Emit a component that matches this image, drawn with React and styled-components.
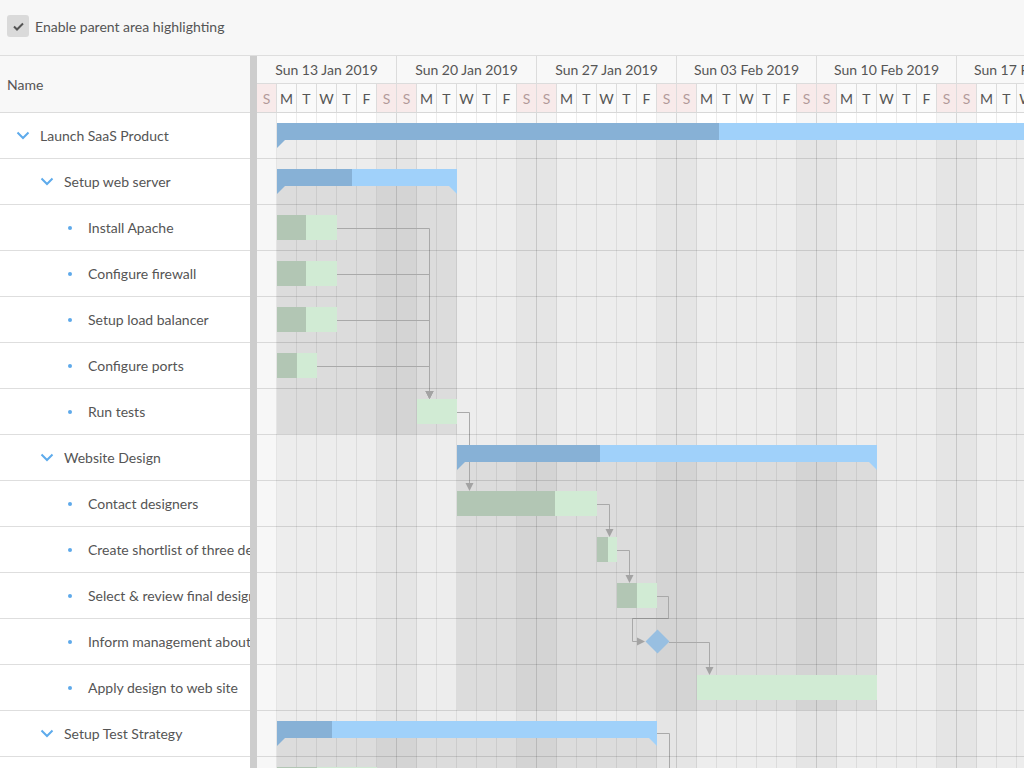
import React from "react";
import styled, { createGlobalStyle } from "styled-components";

const DAY = 20;
const ROW = 46;
const DAYS = 42;
const START = new Date(2019, 0, 13);
const MONTHS = ["Jan", "Feb", "Mar", "Apr", "May", "Jun", "Jul", "Aug", "Sep", "Oct", "Nov", "Dec"];
const LETTERS = ["S", "M", "T", "W", "T", "F", "S"];

const tasks = [
  { id: 1, name: "Launch SaaS Product", level: 0, kind: "parent", start: 1, end: 45, progress: 0.502 },
  { id: 2, name: "Setup web server", level: 1, kind: "parent", start: 1, end: 10, progress: 0.417 },
  { id: 3, name: "Install Apache", level: 2, kind: "leaf", start: 1, end: 4, progress: 0.48 },
  { id: 4, name: "Configure firewall", level: 2, kind: "leaf", start: 1, end: 4, progress: 0.48 },
  { id: 5, name: "Setup load balancer", level: 2, kind: "leaf", start: 1, end: 4, progress: 0.48 },
  { id: 6, name: "Configure ports", level: 2, kind: "leaf", start: 1, end: 3, progress: 0.5 },
  { id: 7, name: "Run tests", level: 2, kind: "leaf", start: 8, end: 10, progress: 0 },
  { id: 8, name: "Website Design", level: 1, kind: "parent", start: 10, end: 31, progress: 0.34 },
  { id: 9, name: "Contact designers", level: 2, kind: "leaf", start: 10, end: 17, progress: 0.7 },
  { id: 10, name: "Create shortlist of three designers", level: 2, kind: "leaf", start: 17, end: 18, progress: 0.55 },
  { id: 11, name: "Select & review final design", level: 2, kind: "leaf", start: 18, end: 20, progress: 0.5 },
  { id: 12, name: "Inform management about decision", level: 2, kind: "milestone", start: 20, end: 20, progress: 0 },
  { id: 13, name: "Apply design to web site", level: 2, kind: "leaf", start: 22, end: 31, progress: 0 },
  { id: 14, name: "Setup Test Strategy", level: 1, kind: "parent", start: 1, end: 20, progress: 0.145 },
  { id: 15, name: "Hire QA staff", level: 2, kind: "leaf", start: 1, end: 6, progress: 0.4 },
  { id: 16, name: "Write test specs", level: 2, kind: "leaf", start: 6, end: 12, progress: 0 },
  { id: 17, name: "Run integration tests", level: 2, kind: "leaf", start: 20, end: 24, progress: 0 },
];

const links = [
  [3, 7], [4, 7], [5, 7], [6, 7], [7, 9], [9, 10], [10, 11], [11, 12], [12, 13], [14, 17],
];

const GlobalStyle = createGlobalStyle`
  html, body { margin: 0; padding: 0; background: #fff; }
  body {
    font-family: Lato, "Open Sans", sans-serif;
    font-size: 14px;
    color: #555;
    overflow: hidden;
  }
  * { box-sizing: border-box; }
`;

const Page = styled.div`
  width: 1024px;
  height: 768px;
  display: flex;
  flex-direction: column;
  overflow: hidden;
`;

const Toolbar = styled.div`
  height: 56px;
  flex: none;
  display: flex;
  align-items: center;
  gap: 6px;
  padding: 0 0 3px 7px;
  background: #f7f7f7;
  border-bottom: 1px solid #dedede;
`;

const CheckBox = styled.span`
  width: 22px;
  height: 22px;
  border-radius: 3px;
  background: #dadada;
  display: flex;
  align-items: center;
  justify-content: center;
`;

const Main = styled.div`
  flex: 1;
  display: flex;
  min-height: 0;
`;

const TreePanel = styled.div`
  width: 250px;
  flex: none;
  background: #fff;
`;

const TreeHeader = styled.div`
  height: 57px;
  display: flex;
  align-items: center;
  padding-left: 7px;
  background: #f8f8f8;
  border-bottom: 1px solid #dcdcdc;
`;

const TreeRow = styled.div`
  height: ${ROW}px;
  display: flex;
  align-items: center;
  padding-left: ${(p) => 16 + p.$level * 24}px;
  border-bottom: 1px solid #dedede;
  white-space: nowrap;
  overflow: hidden;
`;

const IconSlot = styled.span`
  width: 24px;
  flex: none;
  display: flex;
  align-items: center;
`;

const Dot = styled.span`
  width: 4px;
  height: 4px;
  margin-left: 4px;
  border-radius: 50%;
  background: #5ea9ea;
`;

const Splitter = styled.div`
  width: 7px;
  flex: none;
  background: #cdcdcd;
`;

const Timeline = styled.div`
  flex: 1;
  overflow: hidden;
`;

const TimeHeader = styled.div`
  width: ${DAYS * DAY}px;
  background: #f8f8f8;
  border-bottom: 1px solid #d8d8d8;
`;

const HeaderRow = styled.div`
  display: flex;
  height: ${(p) => p.$h}px;
`;

const WeekCell = styled.div`
  width: ${7 * DAY}px;
  flex: none;
  display: flex;
  align-items: center;
  justify-content: center;
  border-right: 1px solid #dcdcdc;
  border-bottom: 1px solid #dcdcdc;
`;

const DayCell = styled.div`
  width: ${DAY}px;
  flex: none;
  display: flex;
  align-items: center;
  justify-content: center;
  border-right: 1px solid #dcdcdc;
  background: ${(p) => (p.$weekend ? "#f8eaea" : "#fafafa")};
  color: ${(p) => (p.$weekend ? "#b39a9a" : "#555")};
`;

const TimeBody = styled.div`
  position: relative;
  width: ${DAYS * DAY}px;
`;

const Columns = styled.div`
  position: absolute;
  inset: 0;
  display: flex;
`;

const Column = styled.div`
  width: ${DAY}px;
  flex: none;
  background: ${(p) => (p.$weekend ? "rgba(0,0,0,0.03)" : "transparent")};
  border-right: 1px solid ${(p) => (p.$weekEnd ? "rgba(0,0,0,0.13)" : "rgba(0,0,0,0.07)")};
`;

const Area = styled.div`
  position: absolute;
  background: rgba(0, 0, 0, 0.07);
`;

const Links = styled.svg`
  position: absolute;
  left: 0;
  top: 0;
`;

const BodyRow = styled.div`
  position: relative;
  height: ${ROW}px;
  border-bottom: 1px solid rgba(0, 0, 0, 0.12);
`;

const Bar = styled.div`
  position: absolute;
  top: 10px;
  height: ${(p) => (p.$parent ? 17 : 25)}px;
  background: ${(p) => (p.$parent ? "#a0d1fa" : "#d1ebd4")};

  &::before,
  &::after {
    content: "";
    display: ${(p) => (p.$parent ? "block" : "none")};
    position: absolute;
    top: 100%;
    width: 0;
    height: 0;
    border-top: 8px solid #a0d1fa;
  }
  &::before {
    left: 0;
    border-top-color: ${(p) => (p.$done ? "#87b1d6" : "#a0d1fa")};
    border-right: 8px solid transparent;
  }
  &::after {
    right: 0;
    border-left: 8px solid transparent;
  }
`;

const Progress = styled.div`
  height: 100%;
  background: ${(p) => (p.$parent ? "#87b1d6" : "#b2c6b4")};
`;

const Milestone = styled.div`
  position: absolute;
  top: 14px;
  width: 17px;
  height: 17px;
  background: #98bfe1;
  transform: rotate(45deg);
`;

const pad = (n) => String(n).padStart(2, "0");

const dayInfo = Array.from({ length: DAYS }, (_, i) => {
  const d = new Date(START.getFullYear(), START.getMonth(), START.getDate() + i);
  const wd = d.getDay();
  return { date: d, wd, weekend: wd === 0 || wd === 6 };
});

const weeks = Array.from({ length: DAYS / 7 }, (_, w) => {
  const d = dayInfo[w * 7].date;
  return `Sun ${pad(d.getDate())} ${MONTHS[d.getMonth()]} ${d.getFullYear()}`;
});

const indexOf = (id) => tasks.findIndex((t) => t.id === id);

function parentAreas() {
  const areas = [];
  tasks.forEach((t, i) => {
    if (t.kind !== "parent") return;
    let last = i;
    while (last + 1 < tasks.length && tasks[last + 1].level > t.level) last++;
    const top = i * ROW + 27;
    areas.push({
      id: t.id,
      left: t.start * DAY,
      top,
      width: (t.end - t.start) * DAY,
      height: (last + 1) * ROW - 1 - top,
    });
  });
  return areas;
}

function linkShape(fromId, toId) {
  const fi = indexOf(fromId);
  const ti = indexOf(toId);
  const from = tasks[fi];
  const to = tasks[ti];
  const fx = from.kind === "milestone" ? from.start * DAY + 12 : from.end * DAY;
  const fy = fi * ROW + (from.kind === "parent" ? 22 : 23);
  const tLeft = to.kind === "milestone" ? to.start * DAY - 12 : to.start * DAY;
  const tx = tLeft + 12;
  const tTop = ti * ROW + 10;
  if (tx >= fx + 12) {
    return {
      d: `M${fx} ${fy + 0.5}H${tx + 0.5}V${tTop - 7}`,
      arrow: `${tx - 3.5},${tTop - 8} ${tx + 4.5},${tTop - 8} ${tx + 0.5},${tTop}`,
    };
  }
  const ty = ti * ROW + 22;
  const turnY = ti * ROW - 1;
  return {
    d: `M${fx} ${fy + 0.5}H${fx + 11.5}V${turnY + 0.5}H${tLeft - 12.5}V${ty + 0.5}H${tLeft - 7}`,
    arrow: `${tLeft - 8},${ty - 3.5} ${tLeft - 8},${ty + 4.5} ${tLeft},${ty + 0.5}`,
  };
}

const Chevron = () => (
  <svg width="14" height="9" viewBox="0 0 14 9">
    <polyline points="1.5,1.5 7,7 12.5,1.5" fill="none" stroke="#5eabec" strokeWidth="2" />
  </svg>
);

const Check = () => (
  <svg width="13" height="11" viewBox="0 0 13 11">
    <polyline points="2,5.5 5,8.5 11,2.5" fill="none" stroke="#555" strokeWidth="2" />
  </svg>
);

export default function App() {
  const areas = parentAreas();
  const shapes = links.map(([a, b]) => ({ key: `${a}-${b}`, ...linkShape(a, b) }));

  return (
    <Page>
      <GlobalStyle />
      <Toolbar>
        <CheckBox>
          <Check />
        </CheckBox>
        <span>Enable parent area highlighting</span>
      </Toolbar>
      <Main>
        <TreePanel>
          <TreeHeader>Name</TreeHeader>
          {tasks.map((t) => (
            <TreeRow key={t.id} $level={t.level}>
              <IconSlot>{t.kind === "parent" ? <Chevron /> : <Dot />}</IconSlot>
              {t.name}
            </TreeRow>
          ))}
        </TreePanel>
        <Splitter />
        <Timeline>
          <TimeHeader>
            <HeaderRow $h={28}>
              {weeks.map((w) => (
                <WeekCell key={w}>{w}</WeekCell>
              ))}
            </HeaderRow>
            <HeaderRow $h={28}>
              {dayInfo.map((d, i) => (
                <DayCell key={i} $weekend={d.weekend}>
                  {LETTERS[d.wd]}
                </DayCell>
              ))}
            </HeaderRow>
          </TimeHeader>
          <TimeBody>
            <Columns>
              {dayInfo.map((d, i) => (
                <Column key={i} $weekend={d.weekend} $weekEnd={d.wd === 6} />
              ))}
            </Columns>
            {areas.map((a) => (
              <Area key={a.id} style={{ left: a.left, top: a.top, width: a.width, height: a.height }} />
            ))}
            <Links width={DAYS * DAY} height={tasks.length * ROW}>
              {shapes.map((s) => (
                <g key={s.key}>
                  <path d={s.d} fill="none" stroke="#a9a9a9" strokeWidth="1" />
                  <polygon points={s.arrow} fill="#a3a3a3" />
                </g>
              ))}
            </Links>
            {tasks.map((t) => (
              <BodyRow key={t.id}>
                {t.kind === "milestone" ? (
                  <Milestone style={{ left: t.start * DAY - 8.5 }} />
                ) : (
                  <Bar
                    $parent={t.kind === "parent"}
                    $done={t.progress > 0}
                    style={{ left: t.start * DAY, width: (t.end - t.start) * DAY }}
                  >
                    <Progress $parent={t.kind === "parent"} style={{ width: `${t.progress * 100}%` }} />
                  </Bar>
                )}
              </BodyRow>
            ))}
          </TimeBody>
        </Timeline>
      </Main>
    </Page>
  );
}
